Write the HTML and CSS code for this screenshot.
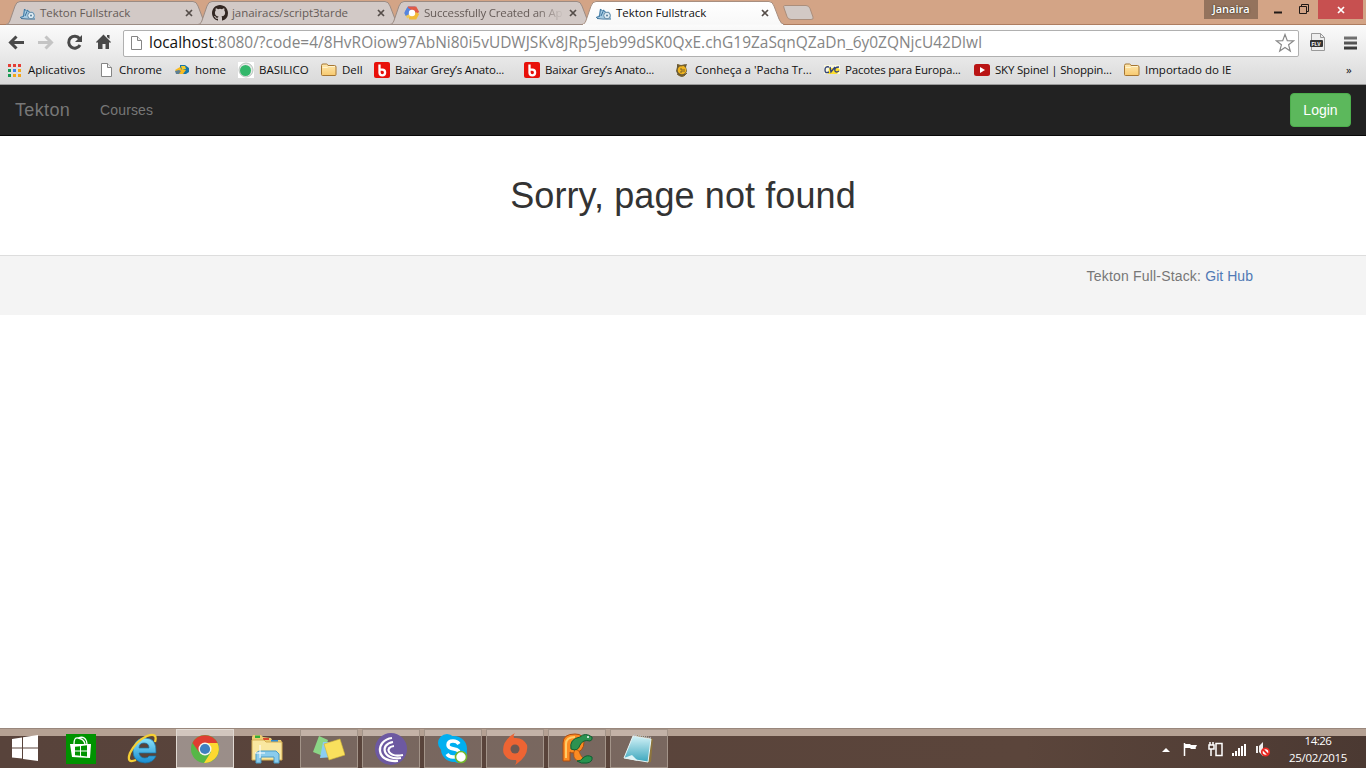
FILE: index.html
```html
<!DOCTYPE html>
<html lang="pt-BR">
<head>
<meta charset="utf-8">
<title>Tekton Fullstrack</title>
<link rel="stylesheet" href="styles.css">
</head>
<body>
<svg class="defs" aria-hidden="true">
  <defs>
    <linearGradient id="active" x1="0" y1="0" x2="0" y2="1"><stop offset="0" stop-color="#fff"/><stop offset="1" stop-color="#f8f8f8"/></linearGradient>
    <linearGradient id="gold" x1="0" y1="0" x2="0" y2="1"><stop offset="0" stop-color="#ffe9b0"/><stop offset="1" stop-color="#f7c96f"/></linearGradient>
    <linearGradient id="ie" x1="0" y1="0" x2="0" y2="1"><stop offset="0" stop-color="#8ee5fc"/><stop offset="1" stop-color="#168bd0"/></linearGradient>
    <linearGradient id="glass" x1="0" y1="0" x2="0" y2="1"><stop offset="0" stop-color="#d3f2f7"/><stop offset="1" stop-color="#3ba6bd"/></linearGradient>
    <linearGradient id="bars" x1="0" y1="0" x2="0" y2="1"><stop offset="0" stop-color="#777"/><stop offset="1" stop-color="#333"/></linearGradient>
    <symbol id="tab" viewBox="0 0 204 25"><path d="M1 24.5C4 24 4.500 22 5.500 19L10 6Q11.500 1.500 15 1.500H188Q191.500 1.500 193 6L198 19Q200 24 203 24.500Z"/></symbol>
    <symbol id="tekton" viewBox="0 0 16 16"><path d="M0 12.500L3 10 4 3.500 6 5.500 8 4.500 10 7 13 6.500 15 10v3.500l-5 .5-5-1z" fill="#a5cbe3"/><path d="M0 12.500l3.500-1L4.500 4 7 6.500 5 11M1 13.500l6 .5h8M7 5l3 2.500" fill="none" stroke="#39729c"/><circle cx="11" cy="10.500" r="3.300" fill="#e0edf5" stroke="#668ba5"/><circle cx="11" cy="10.500" r="1" fill="#557f9d"/></symbol>
    <symbol id="page" viewBox="0 0 16 16"><path d="M3.500 1.500h6l4 4v9h-10z" fill="#fff" stroke="#858585"/><path d="M9.500 1.500v4h4" fill="#eee" stroke="#858585"/></symbol>
    <symbol id="folder" viewBox="0 0 16 16"><path d="M.5 3.500q0-1.500 1.500-1.500h3.500q1 0 1.500 1.500h6.500q1.500 0 1.500 1.500v7.500q0 1-1 1H1.500q-1 0-1-1z" fill="url(#gold)" stroke="#a67632"/><path d="M1.500 5.500h5l1-1h6.500" fill="none" stroke="#fff4cf"/></symbol>
    <symbol id="bred" viewBox="0 0 16 16"><rect width="16" height="16" rx="2" fill="#e8100a"/><path d="M5.500 2.500v8a2.800 2.800 0 1 0 2.800-2.800H5.500" fill="none" stroke="#fff" stroke-width="2.300"/></symbol>
    <symbol id="x" viewBox="0 0 8 8"><path d="M1 1l6 6M7 1L1 7" stroke="currentColor" stroke-width="1.700"/></symbol>
  </defs>
</svg>

<header class="browser">
  <div class="tabstrip">
    <div class="tab"><svg class="shape"><use href="#tab"/></svg><svg class="fav"><use href="#tekton"/></svg><span class="tab-title">Tekton Fullstrack</span><svg class="close"><use href="#x"/></svg></div>
    <div class="tab"><svg class="shape"><use href="#tab"/></svg><svg class="fav" viewBox="0 0 16 16"><path fill="#332722" d="M8 0C3.580 0 0 3.580 0 8c0 3.540 2.290 6.530 5.470 7.590.4.070.55-.17.55-.38 0-.19-.01-.82-.01-1.490-2.010.37-2.530-.49-2.690-.94-.09-.23-.48-.94-.82-1.130-.28-.15-.68-.52-.01-.53.63-.01 1.080.58 1.230.82.72 1.210 1.870.87 2.330.66.07-.52.28-.87.51-1.070-1.780-.2-3.640-.89-3.640-3.950 0-.87.31-1.590.82-2.150-.08-.2-.36-1.020.08-2.120 0 0 .67-.21 2.200.82a7.600 7.600 0 0 1 4 0c1.530-1.040 2.200-.82 2.200-.82.44 1.100.16 1.920.08 2.120.51.56.82 1.270.82 2.150 0 3.070-1.870 3.750-3.650 3.950.29.25.54.73.54 1.480 0 1.070-.01 1.930-.01 2.200 0 .21.15.46.55.38A8 8 0 0 0 16 8c0-4.420-3.580-8-8-8z"/></svg><span class="tab-title">janairacs/script3tarde</span><svg class="close"><use href="#x"/></svg></div>
    <div class="tab"><svg class="shape"><use href="#tab"/></svg><svg class="fav" viewBox="0 0 16 16" fill="none" stroke-width="4"><path d="M2.500 8L5 3.500h6" stroke="#5585df"/><path d="M4 3.500h7L13.500 8" stroke="#e05b48"/><path d="M13.500 8L11 12.500H5" stroke="#f2bb38"/><path d="M2.500 8L5 12.500" stroke="#eec85a"/><path d="M5 3.500L2.500 8l1 2" stroke="#5585df"/><circle cx="8" cy="8" r="3.200" fill="#fff"/></svg><span class="tab-title fade">Successfully Created an Ap</span><svg class="close"><use href="#x"/></svg></div>
    <div class="tab current"><svg class="shape"><use href="#tab"/></svg><svg class="fav"><use href="#tekton"/></svg><span class="tab-title">Tekton Fullstrack</span><svg class="close"><use href="#x"/></svg></div>
    <svg class="newtab" viewBox="0 0 34 18"><path d="M2.500 1.500H24q3 0 4 3l3 8.500q1 2.500-2 2.500H9q-3 0-4-3L2 4Q1.200 1.500 2.500 1.500z" fill="#d2c9c5" stroke="#ab8e7b"/></svg>
    <div class="window-controls">
      <span class="user">Janaira</span>
      <svg class="minmax" viewBox="0 0 60 19"><path d="M16 12.500h8" stroke="#211a17" stroke-width="2"/><path d="M41.500 6.500h7v7h-7zM43.500 6V4.500h7v7H49" fill="none" stroke="#211a17"/></svg>
      <span class="quit"><svg class="close"><use href="#x"/></svg></span>
    </div>
  </div>

  <div class="toolbar">
    <svg class="nav" viewBox="0 0 120 32"><g fill="none" stroke="#494949" stroke-width="3"><path d="M25 17.500H12M17.500 11.500l-6 6 6 6"/><path d="M39 17.500h13M46.500 11.500l6 6-6 6" stroke="#c4c4c4"/><path d="M80.500 13.500a6 6 0 1 0 .5 6.500"/></g><path d="M83 10v7h-7z" fill="#494949"/><path d="M97 17l7.500-7.500L112 17l-1 1-1-1v7h-3.500v-5h-3v5H99v-7l-1 1zM108 10h2.500v4l-2.500-2z" fill="#494949"/></svg>
    <div class="omnibox">
      <svg class="doc"><use href="#page"/></svg>
      <span class="url"><b>localhost</b>:8080/?code=4/8HvROiow97AbNi80i5vUDWJSKv8JRp5Jeb99dSK0QxE.chG19ZaSqnQZaDn_6y0ZQNjcU42DlwI</span>
      <svg class="star" viewBox="0 0 20 20"><path d="M10 1.500l2.300 6.200 6.200.2-4.900 3.900 1.700 6.200L10 14.500 4.700 18l1.700-6.200-4.900-3.900 6.200-.2z" fill="#fff" stroke="#888" stroke-width="1.200"/></svg>
    </div>
    <svg class="flv" viewBox="0 0 18 20"><path d="M2.500 1.500h9l4 4v13h-13z" fill="#eee" stroke="#999"/><path d="M11.500 1.500v4h4" fill="none" stroke="#999"/><rect x="1" y="8" width="13" height="7" rx="1" fill="#333"/><text x="2.500" y="13.500" class="flv-label">FLV</text></svg>
    <svg class="menu" viewBox="0 0 14 14"><path d="M0 .5h13v3H0zM0 5.500h13v3H0zM0 10.500h13v3H0z" fill="url(#bars)"/></svg>
  </div>

  <nav class="bookmarks">
    <a><svg viewBox="0 0 16 16"><path d="M1 2h3v3H1zM6 2h3v3H6zM11 2h3v3h-3z" fill="#e43e36"/><path d="M1 7h3v3H1z" fill="#199b54"/><path d="M6 7h3v3H6z" fill="#3f7fed"/><path d="M11 7h3v3h-3zM6 12h3v3H6zM11 12h3v3h-3z" fill="#f3a61b"/><path d="M1 12h3v3H1z" fill="#199b54"/></svg><span>Aplicativos</span></a>
    <a><svg><use href="#page"/></svg><span>Chrome</span></a>
    <a><svg viewBox="0 0 16 16"><path d="M6 3h5l4 3v4l-3 2H8V8H6z" fill="#1877a9"/><path d="M1 8l5-3 2 3h4l-3 4H4z" fill="#f8ba20"/><path d="M1 9l4-1 2 1-2 3H2z" fill="#5e7f92"/><path d="M7 4h4l1 3-4 1z" fill="#f5cb29"/></svg><span>home</span></a>
    <a><svg viewBox="0 0 16 16"><path d="M0 0h16v16H0z" fill="#fff"/><circle cx="8" cy="8" r="7" fill="#e7e9e8" stroke="#b8c2bc"/><circle cx="7.500" cy="8.500" r="5.500" fill="#32b76a"/></svg><span>BASILICO</span></a>
    <a><svg><use href="#folder"/></svg><span>Dell</span></a>
    <a class="tight"><svg><use href="#bred"/></svg><span>Baixar Grey’s Anato...</span></a>
    <a class="tight"><svg><use href="#bred"/></svg><span>Baixar Grey’s Anato...</span></a>
    <a><svg viewBox="0 0 16 16"><path d="M3 2l4 1 6-1-1 3 1 4-2 4-3 2-4-2-2-4 1-4z" fill="#675937"/><circle cx="8" cy="8" r="4.300" fill="#eeb31f"/><path d="M4 3l3 1 4-1M3 12l3 2h4l3-3M6 7h2v3H6m4-3v3" fill="none" stroke="#7b622b"/></svg><span>Conheça a 'Pacha Tr...</span></a>
    <a class="tight"><svg viewBox="0 0 16 16"><path d="M0 3h16v9H0z" fill="#faf8df"/><path d="M5 6h9l2 2-3 4H4z" fill="#ffe02e"/><path d="M5 5Q1 4 1 8t4 2M6 5l1 5 4-5M15 5q-5 0-4 4 1 2 4 0" fill="none" stroke="#34447a" stroke-width="1.400"/></svg><span>Pacotes para Europa...</span></a>
    <a class="tight"><svg viewBox="0 0 16 16"><rect y="2" width="16" height="12" rx="2.500" fill="#b91414"/><path d="M6 5l5 3-5 3z" fill="#fff"/></svg><span>SKY Spinel | Shoppin...</span></a>
    <a><svg><use href="#folder"/></svg><span>Importado do IE</span></a>
    <span class="more">»</span>
  </nav>
</header>

<main class="page">
  <nav class="navbar"><a class="brand">Tekton</a><a class="courses">Courses</a><button class="login">Login</button></nav>
  <h1>Sorry, page not found</h1>
  <footer class="footer">Tekton Full-Stack: <a>Git Hub</a></footer>
</main>

<div class="taskbar">
  <div class="start"><svg viewBox="0 0 28 28"><path d="M1 5l10-1.500v10H1zM12 3.300L27 1v12.500H12zM1 14.500h10v10L1 23.500zM12 14.500h15V27l-15-2z" fill="#fff"/></svg></div>
  <div class="apps">
    <span><svg viewBox="0 0 32 32"><path d="M1 1h30v30H1z" fill="#009300"/><path d="M5 11h21l-1 14-18-1z" fill="#fff"/><path d="M9 11Q9 4 13 5q6 1 7 6M13 5q8-3 9 6" fill="none" stroke="#fff" stroke-width="1.300"/><path d="M10 13.700l5-.5v4.300h-5zM16 13l6-.7v5.200h-6zM10 18.500h5v4.300l-5-.5zM16 18.500h6v5l-6-.7z" fill="#009300"/></svg></span>
    <span><svg viewBox="0 0 32 32"><path d="M29 20H12q1 5 6 5 3 0 4-2h7q-3 7-11 7Q6 29 6 18 7 5 18 5q12 0 11 15zM12 15h10q0-5-5-5t-5 5z" fill="url(#ie)" stroke="#1675a8" stroke-width=".7" fill-rule="evenodd"/><path d="M28 9q3-10-8-6Q9 8 3 20-1 31 9 27" fill="none" stroke="#f5cf35" stroke-width="2.300"/></svg></span>
    <span class="open focus"><svg viewBox="0 0 32 32"><circle cx="16" cy="16" r="14" fill="#56b747"/><path d="M3.500 10A14 14 0 0 1 28.500 10H16l-6 9z" fill="#df3d31"/><path d="M16 10h12.500A14 14 0 0 1 15 30l7-11z" fill="#fdd831"/><circle cx="16" cy="16" r="6.500" fill="#f5f5ef"/><circle cx="16" cy="16" r="5.100" fill="#3e7fc0"/></svg></span>
    <span><svg viewBox="0 0 32 32"><path d="M1 4l1-2h8l2 2 8 1 1 2h9l1 3v17H1z" fill="#edce73"/><path d="M4 2.500h5V5H4z" fill="#35ad39"/><path d="M12 5h6v2h-6z" fill="#db4a2f"/><path d="M20 7h7v2h-7z" fill="#318bd1"/><path d="M1 7h12l2 2h16v18H1z" fill="#f9e7a0" stroke="#d5ae52"/><path d="M5 30V20l3-2h17l3 3v9h-5v-6H10v6z" fill="#8accec" stroke="#4b9bc4"/><path d="M9 12v13M4 20h10" stroke="#fff"/></svg></span>
    <span class="open"><svg viewBox="0 0 32 32"><path d="M6 3l9 4-5 16-10-4z" fill="#8bd686"/><path d="M10 9h12l-1 15-14 1z" fill="#8bcdf2"/><path d="M11 11l16-5 5 16-16 5z" fill="#f9e05d" stroke="#ceb336" stroke-width=".6"/></svg></span>
    <span class="open"><svg viewBox="0 0 32 32"><circle cx="16" cy="16" r="16" fill="#6d59a1"/><g fill="none" stroke="#fff" stroke-width="2.200"><path d="M17 5C0 7 0 30 23 28"/><path d="M18 9C4 11 8 28 26 25"/><path d="M19 13c-10 1-6 12 9 9"/></g></svg></span>
    <span class="open"><svg viewBox="0 0 32 32"><circle cx="10" cy="10" r="9" fill="#00aff0"/><circle cx="17" cy="16" r="13" fill="#00aff0"/><circle cx="22" cy="22" r="8" fill="#00aff0"/><path d="M22 11q-2-3-6-3-5 0-5 4 0 3 6 4 6 1 5 5-1 3-6 3-4 0-6-3" fill="none" stroke="#fff" stroke-width="3.500"/><circle cx="24" cy="24" r="5.500" fill="#fff" stroke="#73b72b" stroke-width="1.600"/></svg></span>
    <span class="open"><svg viewBox="0 0 32 32"><path d="M16 0Q14 2 15 5 24 4 28 12q2 11-12 20 2-3 1-5Q8 28 4.500 20 2 8 16 0z" fill="#ed6433"/><circle cx="16" cy="16" r="4.500" fill="#6b5851"/></svg></span>
    <span class="open"><svg viewBox="0 0 32 32"><path d="M2 28V10q0-9 12-9 9 0 9 8 0 10-10 11-3 0-4-1v9z" fill="#fc8b22" stroke="#ad4c10"/><path d="M5 25V11q0-7 9-7" fill="none" stroke="#ffcc67" stroke-width="2"/><path d="M18 18q2 7 7 9-9 4-12-3-1-4 1-8z" fill="#fc8b22" stroke="#ad4c10" stroke-width=".7"/><path d="M10 16Q8 6 19 4q5-5 12 0 1 3-2 4-7-2-10 4-2 7-9 4z" fill="#2e9250" stroke="#115e33"/><path d="M16 28q4 0 6-3 4-4 9-1 1 5-5 6-6 1-10-2z" fill="#27924e" stroke="#115e33"/><circle cx="27" cy="4" r="1" fill="#fff"/></svg></span>
    <span class="open"><svg viewBox="0 0 32 32"><path d="M13 2l17 4-2 23-4 1z" fill="#8d753e"/><path d="M10 3l18 3-3 23L1 25z" fill="url(#glass)" stroke="#e8f6f7"/><path d="M11 2l17 3" stroke="#bbb" stroke-width="2" stroke-dasharray="1 1"/><path d="M1 25l8-3 6 6" fill="#ddf3f5"/></svg></span>
  </div>
  <svg class="tray" viewBox="0 0 120 24"><path d="M8 15l4-4 4 4z" fill="#fff"/><path d="M30.500 6v13" stroke="#fff" stroke-width="1.500"/><path d="M31 7h5l1 1h6l-1.500 3 .5 1h-5l-1-1h-5z" fill="#fff"/><path d="M56 5v3m3-3v3m-4 0h5v4h-5zm2 4v7" stroke="#fff" stroke-width="1.500" fill="none"/><path d="M62 6.500h6v12h-6z" fill="none" stroke="#fff" stroke-width="1.500"/><path d="M78 16h2v3h-2zM81 14h2v5h-2zM84 11h2v8h-2zM87 9h2v10h-2zM90 7h2v12h-2z" fill="#fff"/><path d="M102 9h2v7h-2zM105 9l4-4v14l-4-4z" fill="#eee"/><circle cx="111.500" cy="15" r="3.700" fill="#fff" stroke="#e92a23" stroke-width="1.800"/><path d="M109 12.500l5 5" stroke="#e92a23" stroke-width="1.800"/></svg>
  <div class="clock"><span class="time">14:26</span><span>25/02/2015</span></div>
</div>
</body>
</html>
```
FILE: styles.css
```css
* { box-sizing: border-box; }
body { margin: 0; width: 1366px; height: 768px; overflow: hidden; display: flex; flex-direction: column; background: #fff; font-family: "Open Sans", "Noto Sans", sans-serif; }
svg { display: block; flex: none; }
.defs { position: absolute; width: 0; height: 0; }
.browser { height: 85px; flex: none; background: linear-gradient(#fbfbfb 25px, #d9d9d9 84px); border-bottom: 1px solid #999; }

.tabstrip { height: 25px; display: flex; padding-left: 5px; background: #d3a486; border-bottom: 1px solid #ad7d60; }
.tab { position: relative; width: 204px; height: 25px; margin-right: -12px; flex: none; display: flex; align-items: center; padding-left: 15px; color: #655b57; }
.shape { position: absolute; left: 0; top: 0; width: 204px; height: 25px; fill: #d2c9c6; stroke: #9b8b83; }
.current { z-index: 2; color: #111; }
.current .shape { fill: url(#active); stroke: #a88f80; }
.current::after { content: ""; position: absolute; left: 2px; right: 2px; bottom: 0; height: 1px; background: #f9f9f9; }
.fav { position: relative; width: 16px; height: 16px; margin-right: 4px; }
.tab-title { position: relative; width: 141px; margin-right: 4px; white-space: nowrap; font-size: 11.5px; line-height: 18px; letter-spacing: -.04px; }
.fade { letter-spacing: -.19px; mask-image: linear-gradient(90deg, #000 112px, transparent 140px); }
.close { position: relative; width: 8px; height: 8px; color: #554d49; }
.newtab { width: 34px; height: 18px; margin: 4px 0 0 9px; z-index: 3; }
.window-controls { display: flex; margin-left: auto; height: 19px; }
.user { width: 54px; background: #94735d; color: #fff; font-weight: 600; font-size: 11px; line-height: 18px; text-align: center; text-shadow: 0 0 2px #221; }
.minmax { width: 60px; height: 19px; }
.quit { width: 45px; margin-right: 3px; background: #c75050; display: flex; justify-content: center; align-items: center; }
.quit .close { color: #fff; }

.toolbar { height: 32px; display: flex; align-items: center; }
.nav { width: 120px; height: 32px; margin: 0 4px 0 -1px; }
.omnibox { width: 1176px; height: 27px; margin-top: 4px; border: 1px solid #b0b0b0; border-radius: 2px; background: #fff; display: flex; align-items: center; padding: 0 3px 0 4px; }
.doc { width: 16px; height: 16px; margin-right: 5px; }
.url { flex: 1; white-space: nowrap; font-size: 15.46px; color: #858585; line-height: 22px; margin-top: -2px; }
.url b { font-weight: 400; color: #111; }
.star { width: 20px; height: 20px; margin-top: -1px; }
.flv { width: 18px; height: 20px; margin: 2px 0 0 10px; }
.flv-label { font: bold 5px "Liberation Sans", sans-serif; fill: #fff; }
.menu { width: 14px; height: 14px; margin: 3px 0 0 17px; }

.bookmarks { height: 25px; padding-left: 7px; display: grid; grid-template-columns: 91px 76px 64px 83px 53px 150px 150px 150px 150px 150px 222px 1fr; align-items: center; color: #111; font-size: 11.5px; }
.bookmarks a { display: flex; align-items: center; gap: 5px; white-space: nowrap; line-height: 16px; }
.bookmarks .tight { letter-spacing: -.19px; }
.bookmarks svg { width: 16px; height: 16px; }
.more { line-height: 16px; }

.page { flex: 1; font-family: "Liberation Sans", Arial, sans-serif; }
.navbar { height: 51px; background: #222; border-bottom: 1px solid #080808; display: flex; align-items: center; padding: 0 15px; color: #777; }
.brand { font-size: 18px; width: 85px; letter-spacing: .35px; }
.courses { font-size: 14px; flex: 1; letter-spacing: .15px; }
.login { width: 61px; height: 34px; padding: 0; border: 1px solid #4cae4c; border-radius: 4px; background: #5cb85c; color: #fff; font: 14px "Liberation Sans", Arial, sans-serif; }
h1 { margin: 40px 0; text-align: center; font-size: 36px; line-height: 39px; font-weight: 400; color: #333; letter-spacing: .1px; }
.footer { height: 60px; border-top: 1px solid #ddd; background: #f4f4f4; padding: 10px 113px 0 0; text-align: right; font-size: 14px; line-height: 20px; color: #777; letter-spacing: .18px; }
.footer a { color: #5079b5; letter-spacing: .05px; }

.taskbar { height: 40px; flex: none; display: flex; border-top: 1px solid #99877c; background: linear-gradient(#b5a193 7px, transparent 7px), radial-gradient(ellipse at 1085px 18px, #75452f, transparent 24px), linear-gradient(90deg, #58433b, #5b453b 75%, #4b3932); }
.start { width: 50px; padding: 5px 0 0 11px; }
.start svg { width: 28px; height: 28px; }
.apps { display: flex; gap: 4px; padding-left: 2px; }
.apps span { width: 58px; height: 39px; display: grid; place-items: center; }
.apps svg { width: 32px; height: 32px; }
.open { border: 1px solid #a39489; background: #ffffff30; }
.open.focus { border-color: #e1d9d2; background: #ffffff66; }
.tray { width: 120px; height: 24px; margin: 8px -4px 0 auto; }
.clock { width: 96px; padding: 3px 0 0; display: flex; flex-direction: column; align-items: center; color: #fff; font-size: 11.5px; line-height: 17px; letter-spacing: -.3px; }
.time { letter-spacing: -.5px; }
```
